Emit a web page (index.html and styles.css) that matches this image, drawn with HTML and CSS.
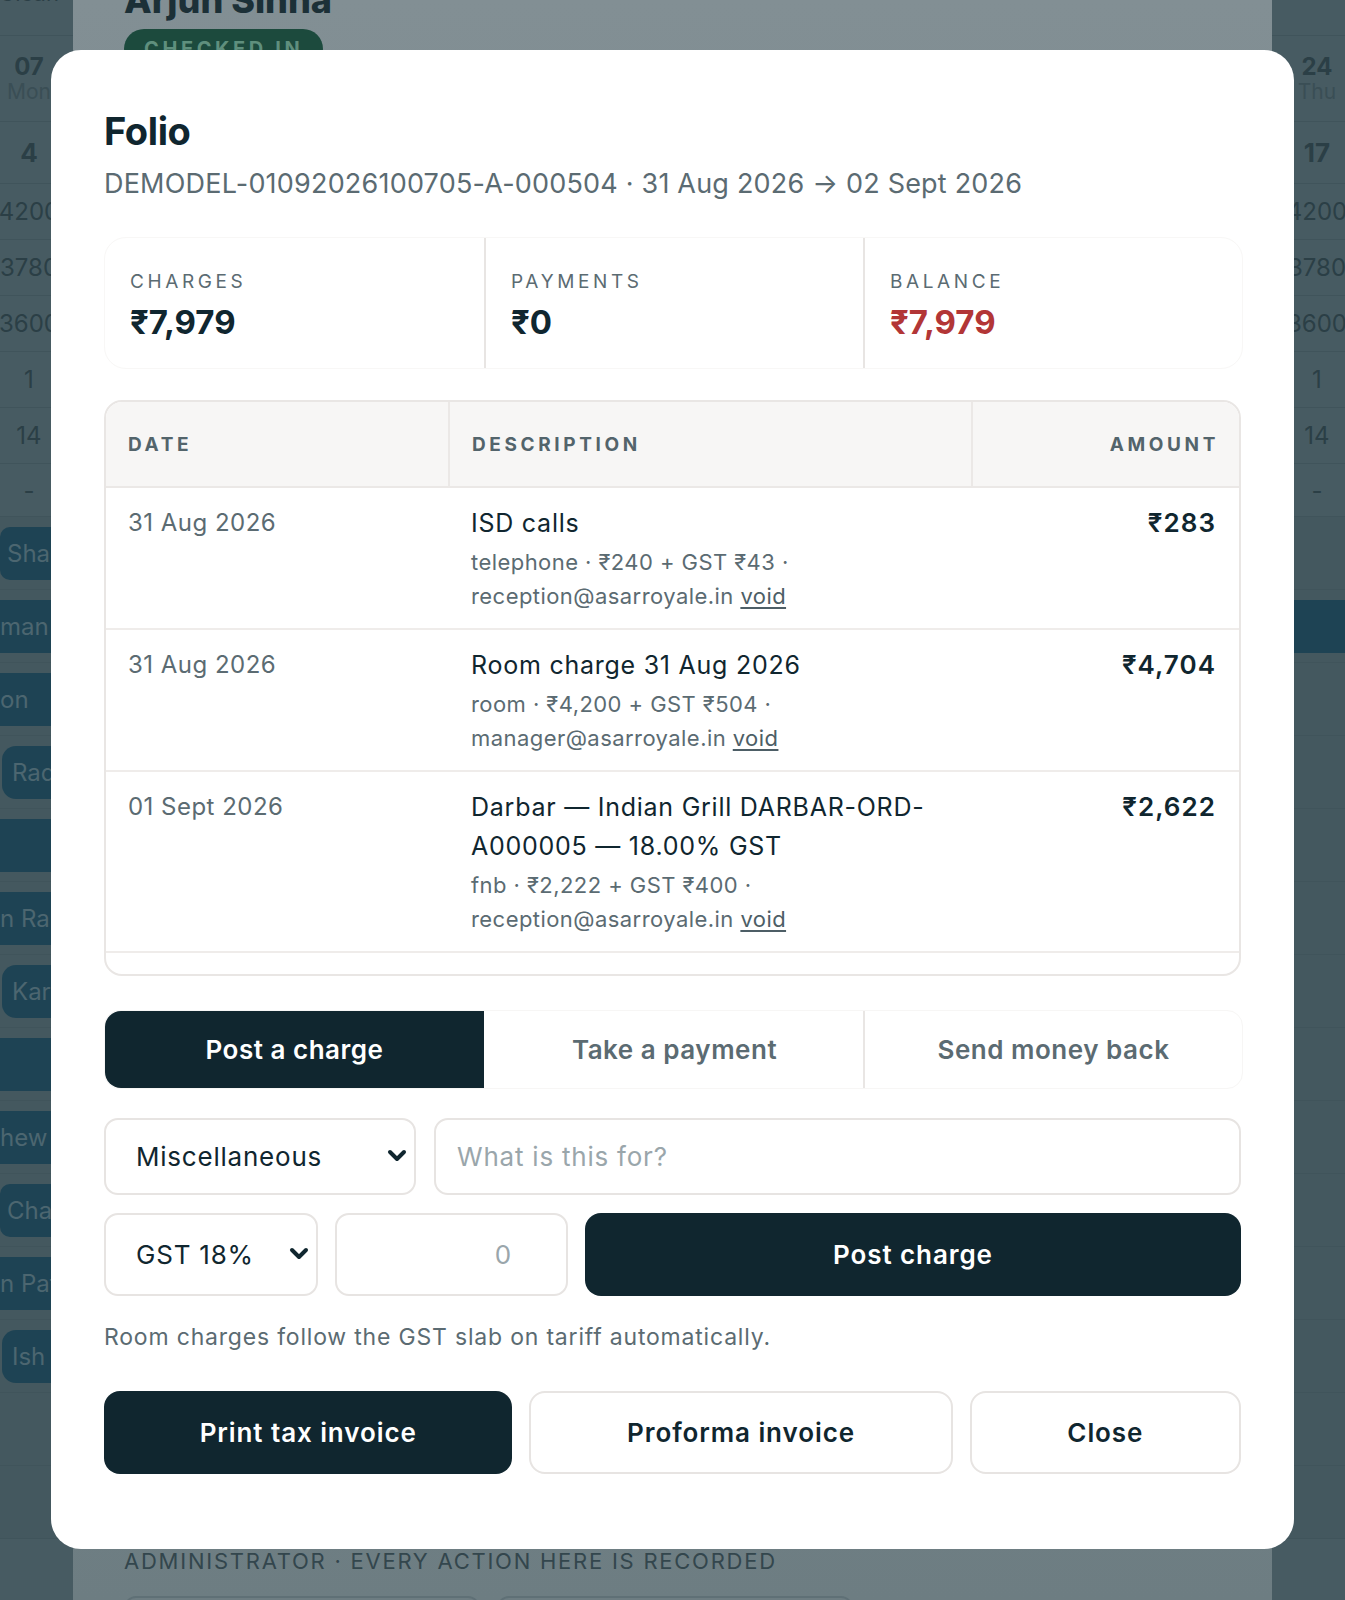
FILE: index.html
```html
<!DOCTYPE html>
<html lang="en">
  <head>
    <meta charset="UTF-8" />
    <meta name="viewport" content="width=device-width, initial-scale=1.0" />
    <title>Folio · Arjun Sinha</title>
    <link rel="stylesheet" href="styles.css">
  </head>
  <body>
    <div class="backdrop">
      <aside class="cal cal-left">
        <div class="cal-cell cal-top"><span>Clean</span></div>
        <div class="cal-cell cal-day"><b>07</b><span>Mon</span></div>
        <div class="cal-cell cal-count">4</div>
        <div class="cal-cell">4200</div>
        <div class="cal-cell">3780</div>
        <div class="cal-cell">3600</div>
        <div class="cal-cell">1</div>
        <div class="cal-cell">14</div>
        <div class="cal-cell cal-last">-</div>
        <div class="lane"><div class="bar bar-start">Sha</div></div>
        <div class="lane"><div class="bar">man</div></div>
        <div class="lane"><div class="bar">on</div></div>
        <div class="lane"><div class="bar bar-start bar-wide">Rad</div></div>
        <div class="lane"><div class="bar"></div></div>
        <div class="lane"><div class="bar">n Ra</div></div>
        <div class="lane"><div class="bar bar-start bar-wide">Kar</div></div>
        <div class="lane"><div class="bar"></div></div>
        <div class="lane"><div class="bar">hew</div></div>
        <div class="lane"><div class="bar bar-start">Cha</div></div>
        <div class="lane"><div class="bar">n Pat</div></div>
        <div class="lane"><div class="bar bar-start bar-wide">Ish</div></div>
        <div class="lane"></div>
        <div class="lane"></div>
      </aside>

      <section class="drawer">
        <h2 class="guest-name">Arjun Sinha</h2>
        <span class="badge">CHECKED IN</span>
        <div class="drawer-spacer"></div>
        <p class="audit-note">ADMINISTRATOR · EVERY ACTION HERE IS RECORDED</p>
        <div class="drawer-boxes">
          <div class="ghost-box"></div>
          <div class="ghost-box"></div>
        </div>
      </section>

      <aside class="cal cal-right">
        <div class="cal-cell cal-top"><span>&nbsp;</span></div>
        <div class="cal-cell cal-day"><b>24</b><span>Thu</span></div>
        <div class="cal-cell cal-count">17</div>
        <div class="cal-cell">4200</div>
        <div class="cal-cell">3780</div>
        <div class="cal-cell">3600</div>
        <div class="cal-cell">1</div>
        <div class="cal-cell">14</div>
        <div class="cal-cell cal-last">-</div>
        <div class="lane"></div>
        <div class="lane"><div class="bar"></div></div>
        <div class="lane"></div>
        <div class="lane"></div>
        <div class="lane"></div>
        <div class="lane"></div>
        <div class="lane"></div>
        <div class="lane"></div>
        <div class="lane"></div>
        <div class="lane"></div>
        <div class="lane"></div>
        <div class="lane"></div>
        <div class="lane"></div>
        <div class="lane"></div>
      </aside>
    </div>

    <div class="modal" role="dialog" aria-labelledby="folioTitle">
      <h1 id="folioTitle" class="folio-title">Folio</h1>
      <p class="folio-ref">DEMODEL-01092026100705-A-000504 · 31 Aug 2026 → 02 Sept 2026</p>

      <div class="stats">
        <div class="stat">
          <div class="stat-label">CHARGES</div>
          <div class="stat-value">₹7,979</div>
        </div>
        <div class="stat">
          <div class="stat-label">PAYMENTS</div>
          <div class="stat-value">₹0</div>
        </div>
        <div class="stat">
          <div class="stat-label">BALANCE</div>
          <div class="stat-value stat-due">₹7,979</div>
        </div>
      </div>

      <div class="ledger">
        <table>
          <colgroup>
            <col class="col-date" />
            <col class="col-desc" />
            <col />
          </colgroup>
          <thead>
            <tr>
              <th>DATE</th>
              <th>DESCRIPTION</th>
              <th class="num">AMOUNT</th>
            </tr>
          </thead>
          <tbody>
            <tr>
              <td class="date">31 Aug 2026</td>
              <td>
                <div class="line-title">ISD calls</div>
                <div class="line-meta">telephone · ₹240 + GST ₹43 · reception@asarroyale.in <a href="#">void</a></div>
              </td>
              <td class="num amount">₹283</td>
            </tr>
            <tr>
              <td class="date">31 Aug 2026</td>
              <td>
                <div class="line-title">Room charge 31 Aug 2026</div>
                <div class="line-meta">room · ₹4,200 + GST ₹504 · manager@asarroyale.in <a href="#">void</a></div>
              </td>
              <td class="num amount">₹4,704</td>
            </tr>
            <tr>
              <td class="date">01 Sept 2026</td>
              <td>
                <div class="line-title">Darbar — Indian Grill DARBAR-ORD-A000005 — 18.00% GST</div>
                <div class="line-meta">fnb · ₹2,222 + GST ₹400 · reception@asarroyale.in <a href="#">void</a></div>
              </td>
              <td class="num amount">₹2,622</td>
            </tr>
          </tbody>
        </table>
      </div>

      <div class="tabs">
        <button type="button" class="tab active">Post a charge</button>
        <button type="button" class="tab">Take a payment</button>
        <button type="button" class="tab">Send money back</button>
      </div>

      <form class="charge-form">
        <div class="charge-row">
          <div class="select-wrap">
            <select class="field">
              <option>Miscellaneous</option>
              <option>Telephone</option>
              <option>Laundry</option>
              <option>Food &amp; beverage</option>
            </select>
            <svg class="chevron" width="20" height="13" viewBox="0 0 20 13"><path d="M3 3 L10 10 L17 3" fill="none" stroke="#10262f" stroke-width="4" stroke-linecap="round" stroke-linejoin="round"/></svg>
          </div>
          <input class="field field-text" type="text" placeholder="What is this for?" />
        </div>
        <div class="charge-row charge-row-2">
          <div class="select-wrap">
            <select class="field">
              <option>GST 18%</option>
              <option>GST 12%</option>
              <option>GST 5%</option>
              <option>No GST</option>
            </select>
            <svg class="chevron" width="20" height="13" viewBox="0 0 20 13"><path d="M3 3 L10 10 L17 3" fill="none" stroke="#10262f" stroke-width="4" stroke-linecap="round" stroke-linejoin="round"/></svg>
          </div>
          <input class="field field-amount" type="number" placeholder="0" />
          <button type="button" class="btn btn-dark">Post charge</button>
        </div>
      </form>

      <p class="hint">Room charges follow the GST slab on tariff automatically.</p>

      <div class="actions">
        <button type="button" class="btn btn-dark">Print tax invoice</button>
        <button type="button" class="btn btn-light">Proforma invoice</button>
        <button type="button" class="btn btn-light">Close</button>
      </div>
    </div>
  </body>
</html>
```

FILE: styles.css
```css
body {
  margin: 0;
  font-family: Inter, "Noto Sans", "DejaVu Sans", sans-serif;
  color: #10262f;
  background: #44585f;
  position: relative;
}

/* dimmed page behind the dialog */
.backdrop {
  display: grid;
  grid-template-columns: 73px 1fr 73px;
  height: 1600px;
  overflow: hidden;
}
.cal {
  background: #475b62;
  color: #2b3f46;
  overflow: hidden;
}
.cal-cell {
  box-sizing: border-box;
  height: 56px;
  display: flex;
  flex-direction: column;
  align-items: center;
  justify-content: center;
  font-size: 24px;
  border-bottom: 1px solid #40545b;
  white-space: nowrap;
}
.cal-left .cal-cell {
  padding-right: 15px;
}
.cal-right .cal-cell {
  padding-left: 17px;
}
.cal-top {
  height: 36px;
  justify-content: flex-start;
}
.cal-top span {
  margin-top: -20px;
  font-size: 22px;
}
.cal-day {
  height: 86px;
  line-height: 1.15;
}
.cal-day b {
  font-size: 24px;
}
.cal-day span {
  font-size: 21px;
  color: #3a4e55;
}
.cal-count {
  height: 62px;
  font-size: 26px;
  font-weight: 700;
}
.cal-last {
  height: 53px;
}
.lane {
  box-sizing: border-box;
  height: 73px;
  padding: 10px 0;
  border-bottom: 1px solid #40545b;
  background: #44585f;
}
.bar {
  height: 53px;
  background: #1e4354;
  color: #4c6670;
  font-size: 24px;
  line-height: 53px;
  white-space: nowrap;
  overflow: hidden;
}
.bar-start {
  padding-left: 7px;
  border-radius: 10px 0 0 10px;
}
.bar-wide {
  margin-left: 2px;
  padding-left: 10px;
  border-radius: 14px 0 0 14px;
}

.drawer {
  display: flex;
  flex-direction: column;
  align-items: flex-start;
  padding: 0 51px;
  background: linear-gradient(180deg, #828f94 0%, #7a888d 45%, #6d7d82 100%);
  overflow: hidden;
}
.guest-name {
  margin: -22px 0 0;
  font-size: 36px;
  line-height: 44px;
  font-weight: 800;
  color: #1c3037;
}
.badge {
  margin-top: 7px;
  padding: 8px 20px;
  border-radius: 22px;
  background: #1c4a3d;
  color: #5f8f7d;
  font-size: 20px;
  font-weight: 700;
  letter-spacing: 0.18em;
}
.drawer-spacer {
  flex: 1;
}
.audit-note {
  margin: 0;
  font-size: 22px;
  line-height: 28px;
  letter-spacing: 0.08em;
  color: #33464d;
  white-space: nowrap;
}
.drawer-boxes {
  display: flex;
  gap: 17px;
  margin-top: 21px;
  margin-bottom: -60px;
}
.ghost-box {
  width: 352px;
  height: 60px;
  border: 2px solid #5f7076;
  border-radius: 12px;
}

/* folio dialog */
.modal {
  position: absolute;
  top: 50px;
  left: 51px;
  width: 1243px;
  box-sizing: border-box;
  padding: 58px 53px 75px;
  background: #fff;
  border-radius: 30px;
}
.folio-title {
  margin: 0;
  font-size: 38px;
  line-height: 46px;
  font-weight: 700;
  letter-spacing: -0.01em;
}
.folio-ref {
  margin: 12px 0 0;
  font-size: 27px;
  line-height: 36px;
  letter-spacing: 0.2px;
  color: #5b6b72;
}

.stats {
  display: grid;
  grid-template-columns: repeat(3, 1fr);
  margin: 35px -2px 0 0;
  border: 1px solid #f8f7f6;
  border-radius: 22px;
}
.stat {
  height: 130px;
  box-sizing: border-box;
  padding: 32px 25px 0;
}
.stat + .stat {
  border-left: 2px solid #e8e5e3;
}
.stat-label {
  font-size: 19px;
  line-height: 24px;
  letter-spacing: 0.19em;
  color: #5b6b72;
}
.stat-value {
  margin-top: 8px;
  font-size: 33px;
  line-height: 40px;
  font-weight: 700;
}
.stat-due {
  color: #b23636;
}

.ledger {
  margin-top: 31px;
  padding-bottom: 21px;
  border: 2px solid #e9e6e4;
  border-radius: 18px;
  overflow: hidden;
}
.ledger table {
  width: 100%;
  border-collapse: collapse;
  table-layout: fixed;
}
.col-date {
  width: 343px;
}
.col-desc {
  width: 523px;
}
.ledger th {
  height: 84px;
  padding: 0 22px;
  background: #f7f6f5;
  border-bottom: 2px solid #ebe8e6;
  text-align: left;
  font-size: 19px;
  font-weight: 700;
  letter-spacing: 0.19em;
  color: #53646b;
}
.ledger th + th {
  border-left: 2px solid #ebe8e6;
}
.ledger td {
  padding: 16px 22px 15px;
  vertical-align: top;
  border-bottom: 2px solid #efecea;
}
.ledger .num {
  text-align: right;
  padding-right: 23px;
}
.ledger th.num {
  padding-right: 20px;
}
.date {
  font-size: 24px;
  line-height: 38px;
  letter-spacing: 0.02em;
  color: #5b6b72;
}
.line-title {
  font-size: 25px;
  line-height: 39px;
  letter-spacing: 0.03em;
}
.line-meta {
  margin-top: 2px;
  font-size: 22px;
  line-height: 34px;
  letter-spacing: 0.02em;
  color: #5b6b72;
}
.line-meta a {
  color: #4d5e66;
  text-underline-offset: 3px;
}
.amount {
  font-size: 26px;
  line-height: 38px;
  font-weight: 600;
  letter-spacing: 0.04em;
}

.tabs {
  display: grid;
  grid-template-columns: repeat(3, 1fr);
  height: 77px;
  margin: 34px -2px 0 0;
  border: 1px solid #f7f6f5;
  border-radius: 16px;
}
.tab {
  border: none;
  background: none;
  font-family: inherit;
  font-size: 26px;
  font-weight: 600;
  letter-spacing: 0.02em;
  color: #5b6b72;
}
.tab + .tab {
  border-left: 2px solid #e9e6e4;
}
.tab.active {
  background: #10262f;
  color: #fff;
  border-radius: 16px 0 0 16px;
}
.tab.active + .tab {
  border-left-color: transparent;
}

.charge-form {
  margin-top: 29px;
}
.charge-row {
  display: grid;
  grid-template-columns: 312px 1fr;
  gap: 18px;
  height: 77px;
}
.charge-row-2 {
  grid-template-columns: 214px 233px 1fr;
  gap: 17px;
  height: 83px;
  margin-top: 18px;
}
.field {
  box-sizing: border-box;
  width: 100%;
  height: 100%;
  border: 2px solid #e7e4e2;
  border-radius: 14px;
  background: #fff;
  font-family: inherit;
  font-size: 26px;
  letter-spacing: 0.03em;
  color: #10262f;
  padding: 0 21px;
  outline: none;
}
.field::placeholder {
  color: #9aa6ab;
}
.select-wrap {
  position: relative;
}
.select-wrap select {
  appearance: none;
  -webkit-appearance: none;
  padding-left: 30px;
}
.chevron {
  position: absolute;
  right: 9px;
  top: 50%;
  margin-top: -8px;
  pointer-events: none;
}
.field-amount {
  text-align: right;
  padding-right: 54px;
  -moz-appearance: textfield;
}
.field-amount::-webkit-inner-spin-button {
  -webkit-appearance: none;
}

.btn {
  border-radius: 16px;
  font-family: inherit;
  font-size: 26px;
  font-weight: 600;
  letter-spacing: 0.035em;
  cursor: pointer;
}
.btn-dark {
  border: none;
  background: #10262f;
  color: #fff;
}
.btn-light {
  border: 2px solid #e7e4e2;
  background: #fff;
  color: #10262f;
}

.hint {
  margin: 26px 0 0;
  font-size: 23px;
  line-height: 30px;
  letter-spacing: 0.035em;
  color: #5b6b72;
}

.actions {
  display: flex;
  gap: 17px;
  height: 83px;
  margin-top: 39px;
}
.actions .btn {
  flex: 1 1 auto;
  padding: 0;
}
```
